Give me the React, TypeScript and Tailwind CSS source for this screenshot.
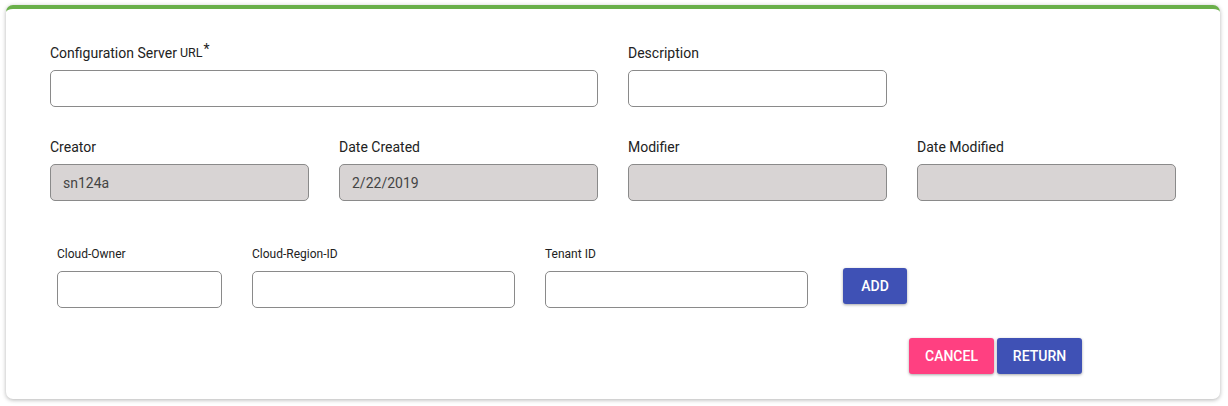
import React from "react";

const font = { fontFamily: "Roboto, 'Liberation Sans', sans-serif" };

function Field({ label, value, disabled, small, className }: { label: React.ReactNode; value?: string; disabled?: boolean; small?: boolean; className?: string }) {
  return (
    <div className={className}>
      <div className={small ? "h-4 text-[12px] leading-4 text-[#222] mb-[9px]" : "h-5 text-[14px] leading-5 text-[#222] mb-[7px]"}>{label}</div>
      <input
        readOnly
        value={value ?? ""}
        className={
          "block w-full h-[37px] rounded-[5px] border border-[#8a8a8a] px-3 text-[14px] text-[#444] outline-none " +
          (disabled ? "bg-[#d8d4d4]" : "bg-white")
        }
      />
    </div>
  );
}

export default function App() {
  return (
    <div className="w-[1228px] h-[406px] bg-white pt-[5px] pl-[6px]" style={font}>
      <div className="w-[1214px] h-[394px] bg-white rounded-[7px] border-t-[4px] border-[#6ab04a] shadow-[0_1px_4px_rgba(0,0,0,0.3)] pl-[44px] pt-[34px]">
        <div className="grid grid-cols-[259px_259px_259px_259px] gap-x-[30px] gap-y-[30px]">
          <Field
            className="col-span-2"
            label={
              <div className="flex items-start h-5">
                <span>Configuration Server</span>
                <span className="ml-[3px] text-[12.5px] leading-5">URL</span>
                <span className="ml-[1px] text-[14px] leading-none -mt-[1px]">*</span>
              </div>
            }
          />
          <Field label="Description" />
          <div />
          <Field label="Creator" value="sn124a" disabled />
          <Field label="Date Created" value="2/22/2019" disabled />
          <Field label="Modifier" disabled />
          <Field label="Date Modified" disabled />
        </div>
        <div className="flex items-start gap-[30px] mt-[45px] ml-[7px]">
          <Field small className="w-[165px]" label="Cloud-Owner" />
          <Field small className="w-[263px]" label="Cloud-Region-ID" />
          <Field small className="w-[263px]" label="Tenant ID" />
          <button className="ml-[5px] mt-[22px] w-[64px] h-[36px] rounded-[3px] bg-[#3f51b5] text-white text-[14px] font-medium shadow-[0_1px_3px_rgba(0,0,0,0.35)]">
            ADD
          </button>
        </div>
        <div className="flex justify-end gap-[3px] mt-[30px] mr-[138px]">
          <button className="w-[85px] h-[36px] rounded-[3px] bg-[#ff4081] text-white text-[14px] font-medium shadow-[0_1px_3px_rgba(0,0,0,0.35)]">
            CANCEL
          </button>
          <button className="w-[85px] h-[36px] rounded-[3px] bg-[#3f51b5] text-white text-[14px] font-medium shadow-[0_1px_3px_rgba(0,0,0,0.35)]">
            RETURN
          </button>
        </div>
      </div>
    </div>
  );
}
